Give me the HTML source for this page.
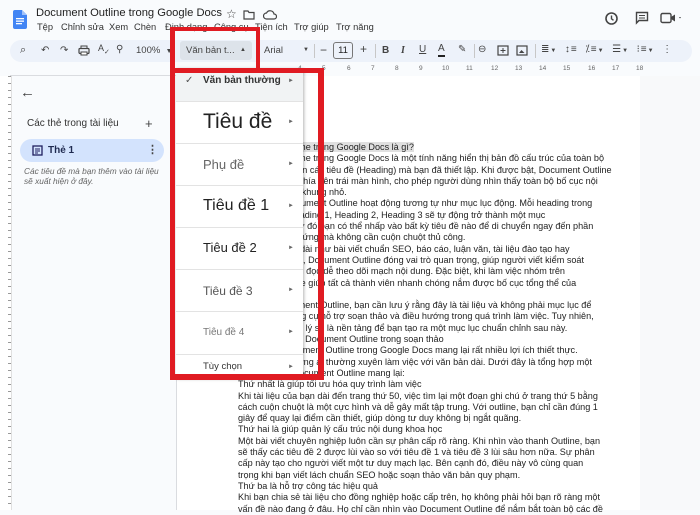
<!DOCTYPE html>
<html><head><meta charset="utf-8"><style>
*{margin:0;padding:0;box-sizing:border-box}
body{width:700px;height:510px;overflow:hidden;background:#f9fbfd;font-family:"Liberation Sans",Arial,sans-serif;position:relative;color:#1f1f1f}
.a{position:absolute;white-space:nowrap}
.doc{position:absolute;left:238px;top:142px;font-size:9.1px;line-height:11.3px;color:#222;white-space:nowrap}
.item{position:absolute;left:176px;width:127px;border-bottom:1px solid #e3e3e3}
.item .t{position:absolute;left:27px;color:#222}
.item .ar{position:absolute;left:112px;font-size:6px;color:#666}
.red{position:absolute;background:#e01b22}
.ic{position:absolute;font-size:11px;color:#444}
.m{position:absolute;top:22px;font-size:9.3px;color:#333}
.rn{position:absolute;top:65px;font-size:6.5px;color:#666}
</style></head><body>
<div class="a" style="left:0;top:0;width:700px;height:38px;background:#f9fbfd"></div>
<svg class="a" style="left:13px;top:10px" width="14" height="19" viewBox="0 0 14 19"><path d="M0 2a2 2 0 0 1 2-2h7l5 5v12a2 2 0 0 1-2 2H2a2 2 0 0 1-2-2z" fill="#4285f4"/><path d="M9 0v5h5z" fill="#a1c2fa"/><rect x="3" y="8" width="8" height="1.3" fill="#fff"/><rect x="3" y="10.5" width="8" height="1.3" fill="#fff"/><rect x="3" y="13" width="6" height="1.3" fill="#fff"/></svg>
<div class="a" style="left:36px;top:7px;font-size:11.2px;color:#1f1f1f">Document Outline trong Google Docs</div>
<div class="a" style="left:226px;top:7px;font-size:12px;color:#444">☆</div>
<svg class="a" style="left:243px;top:10px" width="12" height="10"><path d="M1 1h4l1 1.5h5v6.5h-10z" fill="none" stroke="#444" stroke-width="1.2"/></svg>
<svg class="a" style="left:263px;top:10px" width="14" height="10"><path d="M3.5 9a3 3 0 0 1 0-6 4 4 0 0 1 7.5 1 2.5 2.5 0 0 1 0 5z" fill="none" stroke="#444" stroke-width="1.2"/></svg>
<div class="m" style="left:37px">Tệp</div>
<div class="m" style="left:61px">Chỉnh sửa</div>
<div class="m" style="left:109px">Xem</div>
<div class="m" style="left:134px">Chèn</div>
<div class="m" style="left:165px">Định dạng</div>
<div class="m" style="left:214px">Công cụ</div>
<div class="m" style="left:255px">Tiện ích</div>
<div class="m" style="left:294px">Trợ giúp</div>
<div class="m" style="left:336px">Trợ năng</div>
<svg class="a" style="left:604px;top:11px" width="15" height="15"><circle cx="7.5" cy="7.5" r="5.5" fill="none" stroke="#444" stroke-width="1.6"/><path d="M7.5 4.5v3.3l2 1.5" stroke="#444" stroke-width="1.4" fill="none"/></svg>
<svg class="a" style="left:635px;top:11px" width="14" height="14"><path d="M1.5 1.5h11v8h-8.5l-2.5 2.5z" fill="none" stroke="#444" stroke-width="1.4"/><path d="M4 4.5h6M4 7h6" stroke="#444" stroke-width="1.1"/></svg>
<svg class="a" style="left:660px;top:12px" width="24" height="12"><rect x="1" y="1.5" width="10" height="9" rx="1.5" fill="none" stroke="#444" stroke-width="1.4"/><path d="M11 5l4-2.5v7l-4-2.5z" fill="#444"/><path d="M19 5l2 0-1 1.5z" fill="#444"/></svg>
<div class="a" style="left:10px;top:40px;width:682px;height:22px;background:#edf2fa;border-radius:11px"></div>
<div class="ic" style="left:20px;top:44px">⌕</div>
<div class="ic" style="left:41px;top:45px;font-size:10px">↶</div>
<div class="ic" style="left:60px;top:45px;font-size:10px">↷</div>
<svg class="a" style="left:78px;top:45px" width="12" height="11"><rect x="1" y="3.5" width="10" height="5" rx="1" fill="none" stroke="#444" stroke-width="1.2"/><rect x="3" y="1" width="6" height="2.5" fill="none" stroke="#444"/><rect x="3" y="7" width="6" height="3" fill="#fff" stroke="#444"/></svg>
<div class="ic" style="left:98px;top:43px;font-size:9px">A<sub style="font-size:7px">✓</sub></div>
<div class="ic" style="left:116px;top:44px;font-size:10px">⚲</div>
<div class="a" style="left:136px;top:45px;font-size:9.5px;color:#444">100%&nbsp;&nbsp;<span style="font-size:7px">▼</span></div>
<div class="a" style="left:174px;top:44px;width:1px;height:14px;background:#c7c7c7"></div>
<div class="a" style="left:180px;top:41px;width:72px;height:19px;background:#dde3ea;border-radius:3px"></div>
<div class="a" style="left:186px;top:45px;font-size:9.5px;color:#444">Văn bản t...</div>
<div class="a" style="left:240px;top:47px;font-size:6px;color:#444">▲</div>
<div class="a" style="left:258px;top:44px;width:1px;height:14px;background:#c7c7c7"></div>
<div class="a" style="left:264px;top:45px;font-size:9.5px;color:#444">Arial</div>
<div class="a" style="left:303px;top:47px;font-size:6px;color:#444">▼</div>
<div class="a" style="left:314px;top:44px;width:1px;height:14px;background:#c7c7c7"></div>
<div class="a" style="left:320px;top:43px;font-size:12px;color:#444">−</div>
<div class="a" style="left:333px;top:42px;width:20px;height:17px;border:1px solid #777;border-radius:3px;font-size:9.5px;text-align:center;line-height:15px;color:#222">11</div>
<div class="a" style="left:360px;top:42px;font-size:12px;color:#444">+</div>
<div class="a" style="left:375px;top:44px;width:1px;height:14px;background:#c7c7c7"></div>
<div class="a" style="left:382px;top:45px;font-size:10px;font-weight:bold;color:#444">B</div>
<div class="a" style="left:401px;top:45px;font-size:10px;font-style:italic;font-family:'Liberation Serif',serif;font-weight:bold;color:#444">I</div>
<div class="a" style="left:419px;top:44px;font-size:10px;text-decoration:underline;color:#444">U</div>
<div class="a" style="left:438px;top:43px;font-size:10px;color:#444;border-bottom:2px solid #222;line-height:12px">A</div>
<div class="a" style="left:458px;top:44px;font-size:10px;color:#444">✎</div>
<div class="a" style="left:474px;top:44px;width:1px;height:14px;background:#c7c7c7"></div>
<div class="a" style="left:478px;top:44px;font-size:10px;color:#444">⊖</div>
<svg class="a" style="left:497px;top:45px" width="12" height="11"><rect x="1" y="1" width="10" height="9" fill="none" stroke="#444" stroke-width="1.2"/><path d="M6 3v5M3.5 5.5h5" stroke="#444"/></svg>
<svg class="a" style="left:516px;top:45px" width="12" height="11"><rect x="1" y="1" width="10" height="9" fill="none" stroke="#444" stroke-width="1.2"/><path d="M3 8l2.5-3 3 3z" fill="#444"/></svg>
<div class="a" style="left:535px;top:44px;width:1px;height:14px;background:#c7c7c7"></div>
<div class="a" style="left:541px;top:44px;font-size:10px;color:#444;letter-spacing:1px">≣<span style="font-size:6px">▼</span>&nbsp;&nbsp;↕≡&nbsp;&nbsp;⁒≡<span style="font-size:6px">▼</span>&nbsp;&nbsp;☰<span style="font-size:6px">▼</span>&nbsp;&nbsp;⁝≡<span style="font-size:6px">▼</span>&nbsp;&nbsp;⋮</div>
<div class="a" style="left:176px;top:62px;width:524px;height:14px;background:#f9fbfd"></div>
<div class="a" style="left:300px;top:68px;width:345px;height:4px;background-image:repeating-linear-gradient(90deg,#999 0 1px,transparent 1px 6px)"></div>
<div class="a" style="left:296px;top:63px;width:350px;height:10px;background:#f9fbfd"></div>
<div class="rn" style="left:298px">4</div><div class="rn" style="left:322px">5</div><div class="rn" style="left:347px">6</div><div class="rn" style="left:371px">7</div><div class="rn" style="left:395px">8</div><div class="rn" style="left:419px">9</div><div class="rn" style="left:442px">10</div><div class="rn" style="left:466px">11</div><div class="rn" style="left:491px">12</div><div class="rn" style="left:515px">13</div><div class="rn" style="left:539px">14</div><div class="rn" style="left:563px">15</div><div class="rn" style="left:588px">16</div><div class="rn" style="left:612px">17</div><div class="rn" style="left:636px">18</div>
<div class="a" style="left:10px;top:75px;width:166px;height:1px;background:#dadce0"></div>
<div class="a" style="left:0;top:76px;width:12px;height:434px;background:#fff;border-right:1px solid #e0e0e0;background-image:repeating-linear-gradient(#999 0 1px,transparent 1px 7px);background-size:4px 100%;background-repeat:no-repeat;background-position:8px 0"></div>
<div class="a" style="left:20px;top:84px;font-size:15px;color:#444">←</div>
<div class="a" style="left:27px;top:118px;font-size:10px;color:#333">Các thẻ trong tài liệu</div>
<div class="a" style="left:145px;top:116px;font-size:13px;color:#444">+</div>
<div class="a" style="left:20px;top:139px;width:144px;height:23px;background:#d3e3fd;border-radius:12px"></div>
<svg class="a" style="left:32px;top:145px" width="11" height="11"><rect x="1" y="1" width="9" height="9" fill="none" stroke="#1f1f5f" stroke-width="1.3"/><path d="M3 4h5M3 6h5M3 8h3" stroke="#1f1f5f" stroke-width=".9"/></svg>
<div class="a" style="left:48px;top:145px;font-size:10px;font-weight:bold;color:#1f2a50">Thẻ 1</div>
<div class="a" style="left:147px;top:143px;font-size:11px;font-weight:bold;color:#444">⋮</div>
<div class="a" style="left:24px;top:166px;font-size:8.3px;font-style:italic;color:#666;line-height:10px">Các tiêu đề mà bạn thêm vào tài liệu<br>sẽ xuất hiện ở đây.</div>
<div class="a" style="left:176px;top:76px;width:1px;height:434px;background:#dadce0"></div>
<div class="a" style="left:177px;top:76px;width:463px;height:434px;background:#fff"></div>
<div class="a" style="left:640px;top:76px;width:60px;height:434px;background:#f8f9fa"></div>
<div class="doc"><span style="background:#e0e0e0">Document Outline trong Google Docs là gì?</span><br>
Document Outline trong Google Docs là một tính năng hiển thị bản đồ cấu trúc của toàn bộ<br>
văn bản dựa trên các tiêu đề (Heading) mà bạn đã thiết lập. Khi được bật, Document Outline<br>
sẽ xuất hiện ở phía bên trái màn hình, cho phép người dùng nhìn thấy toàn bộ bố cục nội<br>
dung trong một khung nhỏ.<br>
Về cơ bản, Document Outline hoạt động tương tự như mục lục động. Mỗi heading trong<br>
bài viết như Heading 1, Heading 2, Heading 3 sẽ tự động trở thành một mục<br>
trong outline. Từ đó bạn có thể nhấp vào bất kỳ tiêu đề nào để di chuyển ngay đến phần<br>
nội dung tương ứng mà không cần cuộn chuột thủ công.<br>
Với các tài liệu dài như bài viết chuẩn SEO, báo cáo, luận văn, tài liệu đào tạo hay<br>
hồ sơ dự án lớn, Document Outline đóng vai trò quan trọng, giúp người viết kiểm soát<br>
bố cục và người đọc dễ theo dõi mạch nội dung. Đặc biệt, khi làm việc nhóm trên<br>
cùng file, Outline giúp tất cả thành viên nhanh chóng nắm được bố cục tổng thể của<br>
tài liệu.<br>
Khi dùng Document Outline, bạn cần lưu ý rằng đây là tài liệu và không phải mục lục để<br>
in ấn. Nó là công cụ hỗ trợ soạn thảo và điều hướng trong quá trình làm việc. Tuy nhiên,<br>
một Outline hợp lý sẽ là nền tảng để bạn tạo ra một mục lục chuẩn chỉnh sau này.<br>
Lợi ích khi dùng Document Outline trong soạn thảo<br>
Tính năng Document Outline trong Google Docs mang lại rất nhiều lợi ích thiết thực.<br>
đặc biệt với những ai thường xuyên làm việc với văn bản dài. Dưới đây là tổng hợp một<br>
số lợi ích mà Document Outline mang lại:<br>
Thứ nhất là giúp tối ưu hóa quy trình làm việc<br>
Khi tài liệu của bạn dài đến trang thứ 50, việc tìm lại một đoạn ghi chú ở trang thứ 5 bằng<br>
cách cuộn chuột là một cực hình và dễ gây mất tập trung. Với outline, bạn chỉ cần đúng 1<br>
giây để quay lại điểm cần thiết, giúp dòng tư duy không bị ngắt quãng.<br>
Thứ hai là giúp quản lý cấu trúc nội dung khoa học<br>
Một bài viết chuyên nghiệp luôn cần sự phân cấp rõ ràng. Khi nhìn vào thanh Outline, bạn<br>
sẽ thấy các tiêu đề 2 được lùi vào so với tiêu đề 1 và tiêu đề 3 lùi sâu hơn nữa. Sự phân<br>
cấp này tạo cho người viết một tư duy mạch lạc. Bên cạnh đó, điều này vô cùng quan<br>
trọng khi bạn viết lách chuẩn SEO hoặc soạn thảo văn bản quy phạm.<br>
Thứ ba là hỗ trợ công tác hiệu quả<br>
Khi bạn chia sẻ tài liệu cho đồng nghiệp hoặc cấp trên, họ không phải hỏi bạn rõ ràng một<br>
vấn đề nào đang ở đâu. Họ chỉ cần nhìn vào Document Outline để nắm bắt toàn bộ các đề</div>
<div class="a" style="left:176px;top:68px;width:127px;height:310px;background:#fff;box-shadow:1px 1px 3px rgba(0,0,0,.3)"></div>
<div class="item" style="top:68px;height:34px;background:#f1f3f4"><span class="a" style="left:9px;top:7px;font-size:10px;color:#555">✓</span><span class="t" style="top:7px;font-size:10px;font-weight:bold;color:#333">Văn bản thường</span><span class="ar" style="top:10px">►</span></div>
<div class="item" style="top:102px;height:42px"><span class="t" style="top:8px;font-size:21px">Tiêu đề</span><span class="ar" style="top:17px">►</span></div>
<div class="item" style="top:144px;height:42px"><span class="t" style="top:13px;font-size:13px;color:#666">Phụ đề</span><span class="ar" style="top:17px">►</span></div>
<div class="item" style="top:186px;height:42px"><span class="t" style="top:11px;font-size:16px">Tiêu đề 1</span><span class="ar" style="top:17px">►</span></div>
<div class="item" style="top:228px;height:42px"><span class="t" style="top:12px;font-size:13px">Tiêu đề 2</span><span class="ar" style="top:17px">►</span></div>
<div class="item" style="top:270px;height:42px"><span class="t" style="top:14px;font-size:12px;color:#555">Tiêu đề 3</span><span class="ar" style="top:17px">►</span></div>
<div class="item" style="top:312px;height:43px"><span class="t" style="top:15px;font-size:10px;color:#777">Tiêu đề 4</span><span class="ar" style="top:17px">►</span></div>
<div class="item" style="top:355px;height:23px;border:0"><span class="t" style="top:6px;font-size:9.5px;color:#333">Tùy chọn</span><span class="ar" style="top:9px">►</span></div>
<div class="red" style="left:170px;top:27px;width:90px;height:4px"></div>
<div class="red" style="left:170px;top:27px;width:5px;height:353px"></div>
<div class="red" style="left:256px;top:27px;width:4px;height:44px"></div>
<div class="red" style="left:170px;top:68px;width:154px;height:5px"></div>
<div class="red" style="left:318px;top:68px;width:6px;height:312px"></div>
<div class="red" style="left:170px;top:374px;width:154px;height:6px"></div>
</body></html>
